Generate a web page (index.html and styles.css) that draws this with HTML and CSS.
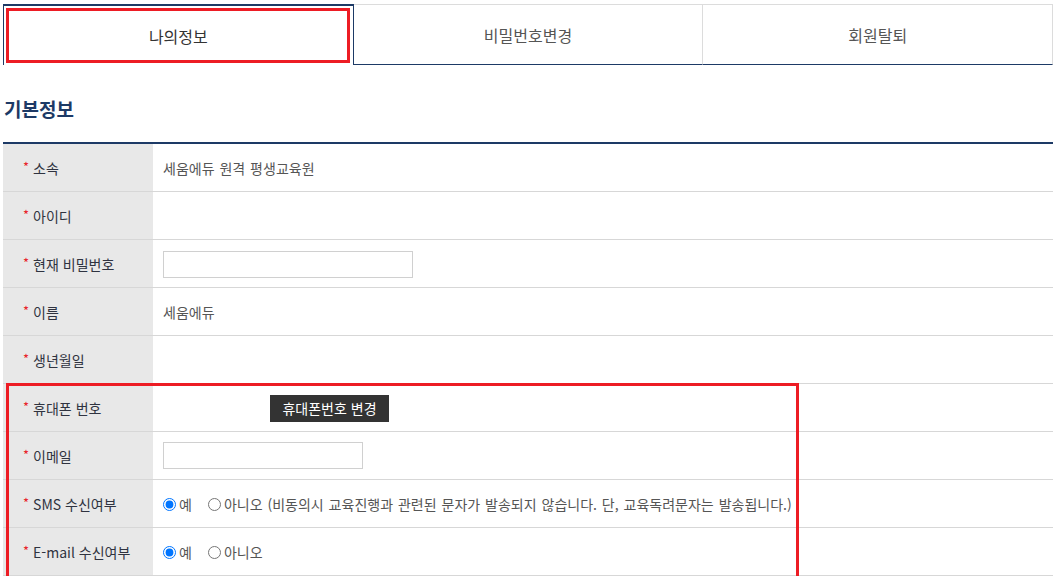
FILE: index.html
```html
<!DOCTYPE html>
<html lang="ko">
<head>
<meta charset="utf-8">
<title>나의정보</title>
<link rel="stylesheet" href="styles.css">
</head>
<body>
<div class="page">
  <nav class="tabs">
    <a class="tab tab-active">나의정보</a>
    <a class="tab">비밀번호변경</a>
    <a class="tab">회원탈퇴</a>
  </nav>

  <h2 class="section-title">기본정보</h2>

  <div class="info-table">
    <div class="row">
      <div class="label"><span class="req">*</span>소속</div>
      <div class="value">세움에듀 원격 평생교육원</div>
    </div>
    <div class="row">
      <div class="label"><span class="req">*</span>아이디</div>
      <div class="value"></div>
    </div>
    <div class="row">
      <div class="label"><span class="req">*</span>현재 비밀번호</div>
      <div class="value"><input class="field field-pw" type="password"></div>
    </div>
    <div class="row">
      <div class="label"><span class="req">*</span>이름</div>
      <div class="value">세움에듀</div>
    </div>
    <div class="row">
      <div class="label"><span class="req">*</span>생년월일</div>
      <div class="value"></div>
    </div>
    <div class="row">
      <div class="label"><span class="req">*</span>휴대폰 번호</div>
      <div class="value"><button class="btn-dark" type="button">휴대폰번호 변경</button></div>
    </div>
    <div class="row">
      <div class="label"><span class="req">*</span>이메일</div>
      <div class="value"><input class="field field-mail" type="text"></div>
    </div>
    <div class="row">
      <div class="label"><span class="req">*</span>SMS 수신여부</div>
      <div class="value">
        <label class="opt"><input type="radio" name="sms" checked>예</label>
        <label class="opt"><input type="radio" name="sms">아니오 (비동의시 교육진행과 관련된 문자가 발송되지 않습니다. 단, 교육독려문자는 발송됩니다.)</label>
      </div>
    </div>
    <div class="row">
      <div class="label"><span class="req">*</span>E-mail 수신여부</div>
      <div class="value">
        <label class="opt"><input type="radio" name="mail" checked>예</label>
        <label class="opt"><input type="radio" name="mail">아니오</label>
      </div>
    </div>
  </div>

  <div class="mark mark-tab"></div>
  <div class="mark mark-rows"></div>
</div>
</body>
</html>
```

FILE: styles.css
```css
html, body {
  margin: 0;
  padding: 0;
  background: #fff;
}

body {
  font-family: "Noto Sans CJK KR", "Noto Sans", sans-serif;
  font-size: 14px;
  color: #333;
}

.page {
  position: relative;
  width: 1050px;
  padding: 4px 5px 0 3px;
}

/* tabs */
.tabs {
  display: flex;
}

.tab {
  flex: 1;
  height: 61px;
  box-sizing: border-box;
  display: flex;
  align-items: center;
  justify-content: center;
  font-size: 16px;
  color: #555;
  border-top: 1px solid #dcdcdc;
  border-right: 1px solid #dcdcdc;
  border-bottom: 1px solid #1d3a66;
  cursor: pointer;
}

.tab-active {
  color: #333;
  border-top: 2px solid #1d3a66;
  border-left: 1px solid #1d3a66;
  border-right: 1px solid #1d3a66;
  border-bottom: 0;
}

/* section title */
.section-title {
  margin: 30px 0 0 1px;
  height: 47px;
  line-height: 28px;
  font-size: 19px;
  font-weight: bold;
  color: #1d3a66;
}

/* table */
.info-table {
  border-top: 2px solid #1d3a66;
}

.row {
  display: grid;
  grid-template-columns: 150px 1fr;
  height: 48px;
  box-sizing: border-box;
  border-bottom: 1px solid #d7d7d7;
}

.label {
  background: #e8e8e8;
  display: flex;
  align-items: center;
  padding-left: 20px;
  color: #2f3340;
}

.req {
  color: #e8232b;
  font-size: 13px;
  margin-right: 4px;
  position: relative;
  top: -1px;
}

.value {
  display: flex;
  align-items: center;
  padding-left: 10px;
  color: #555;
  word-spacing: 1px;
}

.field {
  height: 27px;
  box-sizing: border-box;
  border: 1px solid #d0d0d0;
  margin: 0;
  padding: 0 6px;
  font: inherit;
}

.field-pw {
  width: 250px;
  margin-top: 1px;
}

.field-mail {
  width: 200px;
}

.btn-dark {
  margin-left: 107px;
  margin-top: 1px;
  height: 27px;
  width: 119px;
  padding: 0;
  border: 0;
  background: #333;
  color: #fff;
  font: inherit;
  font-size: 14px;
}

.opt {
  display: flex;
  align-items: center;
  margin-right: 16px;
  color: #555;
}

.opt input {
  margin: 2px 3px 0 0;
  width: 13px;
  height: 13px;
}

/* red annotation overlays */
.mark {
  position: absolute;
  border: 3px solid #ed1c24;
  box-sizing: border-box;
  pointer-events: none;
}

.mark-tab {
  left: 6px;
  top: 8px;
  width: 344px;
  height: 55px;
}

.mark-rows {
  left: 6px;
  top: 383px;
  width: 793px;
  height: 196px;
}
```
